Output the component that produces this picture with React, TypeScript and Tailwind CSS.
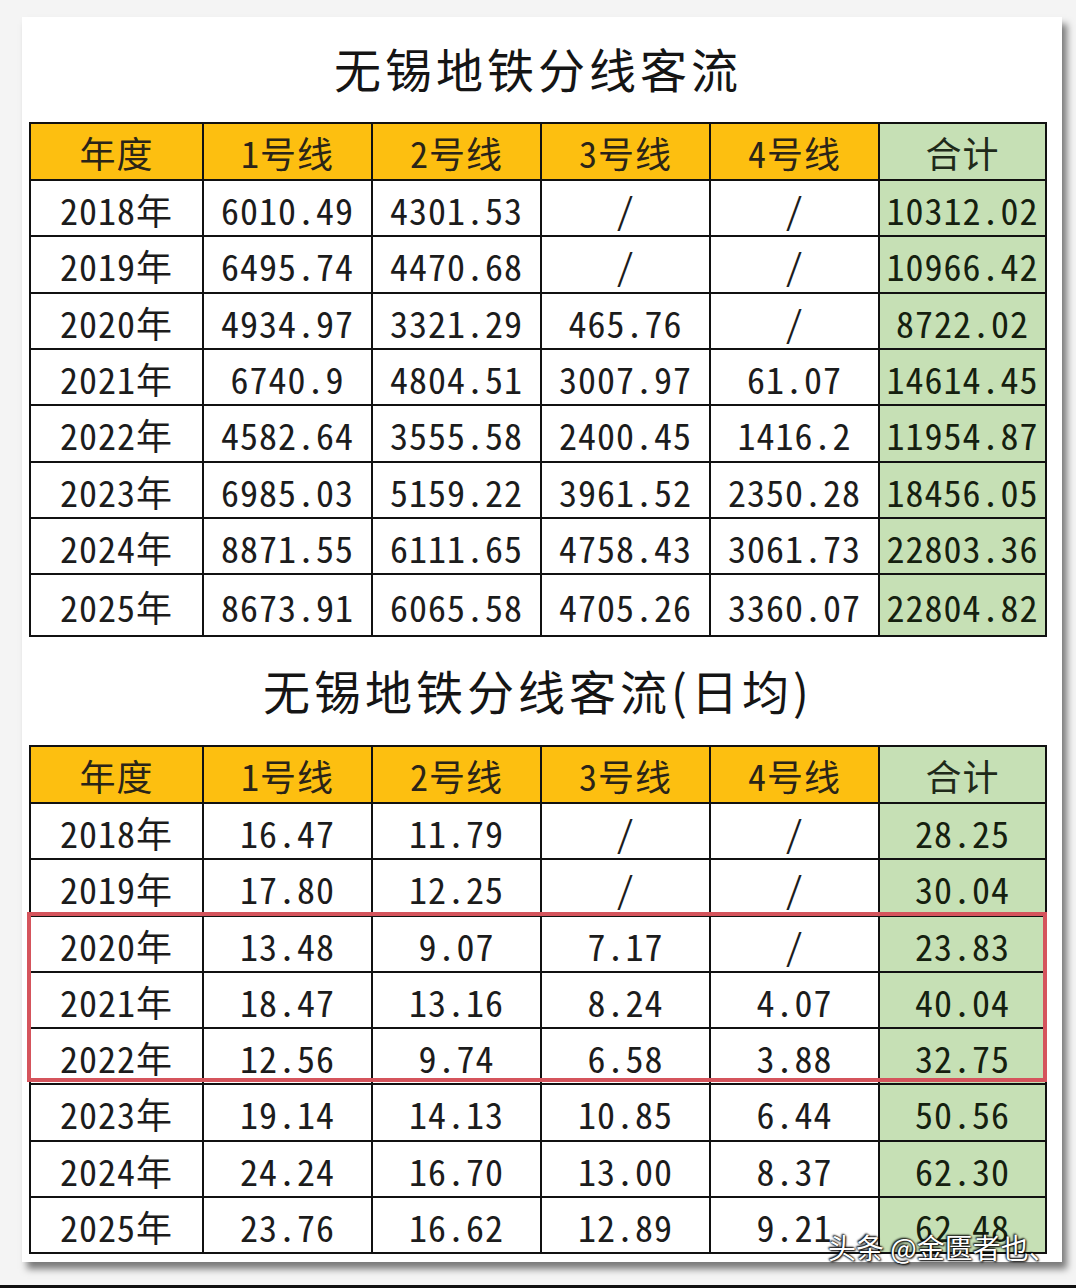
type Row = { year: string; cells: string[]; total: string; h: string };

const totalRows: Row[] = [
  { year: "2018年", cells: ["6010.49", "4301.53", "/", "/"], total: "10312.02", h: "h-[56px]" },
  { year: "2019年", cells: ["6495.74", "4470.68", "/", "/"], total: "10966.42", h: "h-[57px]" },
  { year: "2020年", cells: ["4934.97", "3321.29", "465.76", "/"], total: "8722.02", h: "h-[56px]" },
  { year: "2021年", cells: ["6740.9", "4804.51", "3007.97", "61.07"], total: "14614.45", h: "h-[56px]" },
  { year: "2022年", cells: ["4582.64", "3555.58", "2400.45", "1416.2"], total: "11954.87", h: "h-[57px]" },
  { year: "2023年", cells: ["6985.03", "5159.22", "3961.52", "2350.28"], total: "18456.05", h: "h-[56px]" },
  { year: "2024年", cells: ["8871.55", "6111.65", "4758.43", "3061.73"], total: "22803.36", h: "h-[56px]" },
  { year: "2025年", cells: ["8673.91", "6065.58", "4705.26", "3360.07"], total: "22804.82", h: "h-[62px]" },
];

const dailyRows: Row[] = [
  { year: "2018年", cells: ["16.47", "11.79", "/", "/"], total: "28.25", h: "h-[56px]" },
  { year: "2019年", cells: ["17.80", "12.25", "/", "/"], total: "30.04", h: "h-[57px]" },
  { year: "2020年", cells: ["13.48", "9.07", "7.17", "/"], total: "23.83", h: "h-[56px]" },
  { year: "2021年", cells: ["18.47", "13.16", "8.24", "4.07"], total: "40.04", h: "h-[56px]" },
  { year: "2022年", cells: ["12.56", "9.74", "6.58", "3.88"], total: "32.75", h: "h-[56px]" },
  { year: "2023年", cells: ["19.14", "14.13", "10.85", "6.44"], total: "50.56", h: "h-[57px]" },
  { year: "2024年", cells: ["24.24", "16.70", "13.00", "8.37"], total: "62.30", h: "h-[56px]" },
  { year: "2025年", cells: ["23.76", "16.62", "12.89", "9.21"], total: "62.48", h: "h-[56px]" },
];

const headers = ["1号线", "2号线", "3号线", "4号线"];

const cellFont =
  "font-['Noto_Sans_Mono_CJK_SC','Noto_Sans_CJK_SC',monospace] text-[36px] font-normal tracking-[1px] leading-none";

function DataTable({ rows }: { rows: Row[] }) {
  return (
    <div className="w-[1018px] border-2 border-[#111] text-[#1c1c1c]">
      <div className="grid h-[55px] grid-cols-[171px_169px_169px_169px_169px_1fr]">
        <div className={`flex items-center justify-center bg-[#fdbf10] text-[#2a2418] ${cellFont}`}>年度</div>
        {headers.map((h) => (
          <div
            key={h}
            className={`flex items-center justify-center border-l-2 border-[#111] bg-[#fdbf10] text-[#2a2418] ${cellFont}`}
          >
            {h}
          </div>
        ))}
        <div className={`flex items-center justify-center border-l-2 border-[#111] bg-[#c6e0b5] text-[#1f2a1a] ${cellFont}`}>
          合计
        </div>
      </div>
      {rows.map((r) => (
        <div
          key={r.year}
          className={`grid grid-cols-[171px_169px_169px_169px_169px_1fr] border-t-2 border-[#111] ${r.h}`}
        >
          <div className={`flex items-center justify-center pt-[1px] ${cellFont}`}>{r.year}</div>
          {r.cells.map((c, i) => (
            <div
              key={i}
              className={`flex items-center justify-center border-l-2 border-[#111] pt-[1px] ${cellFont}`}
            >
              {c}
            </div>
          ))}
          <div
            className={`flex items-center justify-center border-l-2 border-[#111] bg-[#c6e0b5] pt-[1px] text-[#15200f] ${cellFont}`}
          >
            {r.total}
          </div>
        </div>
      ))}
    </div>
  );
}

export default function App() {
  return (
    <div className="relative flex h-[1288px] w-[1076px] flex-col bg-[#f4f4f4] font-['Noto_Sans_CJK_SC',sans-serif]">
      <div className="ml-[22px] mt-[17px] flex h-[1245px] w-[1040px] flex-col bg-white pl-[7px] shadow-[5px_7px_7px_rgba(0,0,0,0.5)]">
        <div className="flex h-[105px] w-[1018px] items-center justify-center pb-[4px]">
          <h1 className="text-[47px] font-normal leading-none tracking-[4px] text-[#151515]">无锡地铁分线客流</h1>
        </div>
        <DataTable rows={totalRows} />
        <div className="flex h-[108px] w-[1018px] items-center justify-center pb-[4px]">
          <h1 className="text-[47px] font-normal leading-none tracking-[4px] text-[#151515]">
            无锡地铁分线客流(日均)
          </h1>
        </div>
        <div className="relative">
          <DataTable rows={dailyRows} />
          <div className="absolute left-[-2px] top-[167px] h-[170px] w-[1020px] border-4 border-[#d5545c]" />
        </div>
      </div>
      <div className="absolute left-[828px] top-[1233px] text-[28px] leading-none text-white [text-shadow:0_0_2px_#000,1px_1px_2px_#000,-1px_-1px_2px_#000]">
        头条 @金匮者也、
      </div>
      <div className="mt-auto h-[3px] w-full bg-[#111]" />
    </div>
  );
}
